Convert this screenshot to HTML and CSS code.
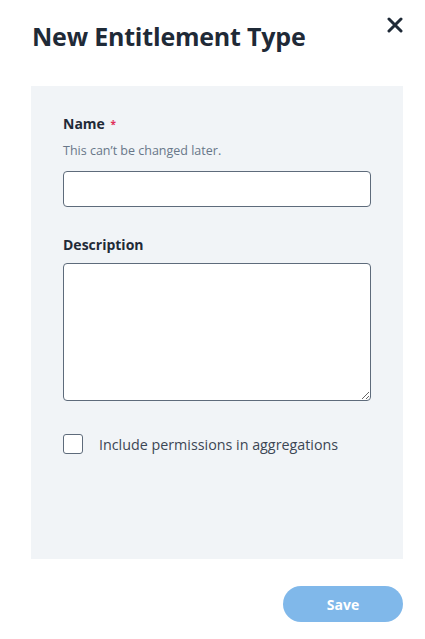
FILE: index.html
```html
<!DOCTYPE html>
<html lang="en">
<head>
  <meta charset="UTF-8" />
  <meta name="viewport" content="width=device-width, initial-scale=1.0"/>
  <title>New Entitlement Type</title>
  <link rel="stylesheet" href="styles.css">
</head>
<body>

  <div class="modal">
    <div class="modal-header">
      <h2>New Entitlement Type</h2>
      <button class="close-btn" aria-label="Close">
        <svg width="16" height="16" viewBox="0 0 16 16">
          <path d="M2 2 L14 14 M14 2 L2 14" stroke="#1f2a37" stroke-width="3" stroke-linecap="round"/>
        </svg>
      </button>
    </div>

    <div class="modal-body">
      <div class="field">
        <label for="nameInput" class="field-label">Name <span class="required">*</span></label>
        <div class="hint">This can’t be changed later.</div>
        <input type="text" id="nameInput" />
      </div>

      <div class="field">
        <label for="descInput" class="field-label">Description</label>
        <textarea id="descInput"></textarea>
      </div>

      <label class="check-row">
        <input type="checkbox" />
        <span>Include permissions in aggregations</span>
      </label>
    </div>

    <div class="modal-footer">
      <button class="save-btn" disabled>Save</button>
    </div>
  </div>

</body>
</html>
```

FILE: styles.css
```css
:root {
  --text-color: #1f2a37;
  --muted-color: #687789;
  --panel-color: #f1f4f7;
  --border-color: #5e6b7b;
  --accent-color: #80b8ea;
}

* {
  margin: 0;
  padding: 0;
  box-sizing: border-box;
}

body {
  font-family: "Open Sans", "Noto Sans", sans-serif;
  color: var(--text-color);
  background: #fff;
}

.modal {
  width: 425px;
  padding: 0 22px 0 31px;
}

.modal-header {
  display: flex;
  justify-content: space-between;
  align-items: flex-start;
  padding-top: 18px;
  height: 86px;
}

.modal-header h2 {
  font-size: 25px;
  font-weight: 700;
  line-height: 36px;
  margin-left: 1px;
  letter-spacing: -0.2px;
}

.close-btn {
  background: none;
  border: none;
  margin-top: -1px;
  padding: 0;
  width: 16px;
  height: 16px;
  cursor: pointer;
}

.modal-body {
  background: var(--panel-color);
  height: 473px;
  padding: 28px 32px 0 32px;
}

.field {
  display: flex;
  flex-direction: column;
  margin-bottom: 28px;
}

.field-label {
  font-size: 14px;
  font-weight: 700;
  line-height: 20px;
  margin-bottom: 6px;
}

.field .field-label:only-of-type {
  margin-bottom: 8px;
}

.required {
  color: #e0305a;
  font-size: 10px;
  vertical-align: 1px;
  margin-left: 2px;
}

.hint {
  font-size: 12.5px;
  color: var(--muted-color);
  line-height: 18px;
  margin-bottom: 11px;
}

input[type="text"],
textarea {
  width: 308px;
  border: 1px solid var(--border-color);
  border-radius: 4px;
  background: #fff;
  font-family: inherit;
  font-size: 14px;
}

input[type="text"] {
  height: 36px;
}

textarea {
  height: 138px;
  resize: vertical;
}

.check-row {
  display: flex;
  align-items: center;
  gap: 16px;
  margin-top: 33px;
  font-size: 14.3px;
  color: #3c4654;
}

.check-row input {
  appearance: none;
  width: 20px;
  height: 20px;
  border: 1px solid var(--border-color);
  border-radius: 3px;
  background: #fff;
}

.modal-footer {
  display: flex;
  justify-content: flex-end;
  padding-top: 27px;
}

.save-btn {
  background: var(--accent-color);
  color: #fff;
  border: none;
  width: 120px;
  height: 36px;
  border-radius: 18px;
  font-family: inherit;
  font-size: 14px;
  font-weight: 700;
}
```
